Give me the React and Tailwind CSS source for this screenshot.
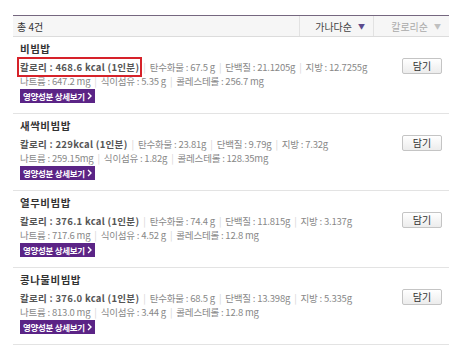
import React from 'react';

// Food nutrition search results
const FONT = { fontFamily: '"Noto Sans CJK KR", "Noto Sans", sans-serif' };

const foods = [
  {
    name: '비빔밥',
    kcal: '468.6 kcal',
    carb: '67.5 g',
    protein: '21.1205g',
    fat: '12.7255g',
    sodium: '647.2 mg',
    fiber: '5.35 g',
    chol: '256.7 mg',
    highlight: true,
  },
  {
    name: '새싹비빔밥',
    kcal: '229kcal',
    carb: '23.81g',
    protein: '9.79g',
    fat: '7.32g',
    sodium: '259.15mg',
    fiber: '1.82g',
    chol: '128.35mg',
  },
  {
    name: '열무비빔밥',
    kcal: '376.1 kcal',
    carb: '74.4 g',
    protein: '11.815g',
    fat: '3.137g',
    sodium: '717.6 mg',
    fiber: '4.52 g',
    chol: '12.8 mg',
  },
  {
    name: '콩나물비빔밥',
    kcal: '376.0 kcal',
    carb: '68.5 g',
    protein: '13.398g',
    fat: '5.335g',
    sodium: '813.0 mg',
    fiber: '3.44 g',
    chol: '12.8 mg',
  },
];

function Bar() {
  return <span className="mx-[4px] text-[#d4d4d4]">|</span>;
}

function FoodRow({ food }) {
  return (
    <div className="flex border-b border-[#e3e3e3] pl-[7px] pr-[7px] pt-[5px] pb-[10px]">
      <div className="flex-1">
        <div className="h-[14px] text-[10.5px] font-bold leading-[14px] tracking-[0.5px] text-[#333]">
          {food.name}
        </div>
        <div className="mt-[4px] h-[14px] text-[9.5px] leading-[14px] tracking-[-0.2px] text-[#888] whitespace-nowrap">
          <span
            className={
              'font-bold tracking-[0.3px] text-[#555] ' +
              (food.highlight ? 'outline-2 outline-offset-[1px] outline-solid outline-[#d6222a]' : '')
            }
          >
            칼로리 : {food.kcal} (1인분)
          </span>
          <Bar />
          <span>탄수화물 : {food.carb}</span>
          <Bar />
          <span>단백질 : {food.protein}</span>
          <Bar />
          <span>지방 : {food.fat}</span>
        </div>
        <div className="h-[14px] text-[9.5px] leading-[14px] tracking-[-0.2px] text-[#888] whitespace-nowrap">
          <span>나트륨 : {food.sodium}</span>
          <Bar />
          <span>식이섬유 : {food.fiber}</span>
          <Bar />
          <span>콜레스테롤 : {food.chol}</span>
        </div>
        <div className="mt-[1px] flex">
          <span className="flex h-[14px] items-center gap-[2px] bg-[#5b2486] px-[3px] text-[8.5px] font-bold leading-none tracking-[-0.3px] text-white whitespace-nowrap">
            영양성분 상세보기
            <svg width="5" height="8" viewBox="0 0 5 8" fill="none">
              <path d="M1 1l3 3-3 3" stroke="white" strokeWidth="1.4" />
            </svg>
          </span>
        </div>
      </div>
      <div className="pt-[16px]">
        <button className="flex h-[16px] w-[40px] items-center justify-center rounded-[2px] border border-[#c4c4c4] bg-gradient-to-b from-white to-[#ececec] text-[10px] leading-none text-[#333]">
          담기
        </button>
      </div>
    </div>
  );
}

export default function App() {
  return (
    <div className="h-[350px] w-[466px] bg-white pt-[15px]" style={FONT}>
      <div className="ml-[13px] w-[436px]">
        <div className="flex h-[22px] items-center border-t border-b border-t-[#75677f] border-b-[#dcdcdc] bg-[#f6f6f6] text-[10px]">
          <div className="flex-1 pl-[4px] text-[#333]">총 4건</div>
          <div className="flex h-full w-[74px] items-center justify-end gap-[6px] border-l border-[#e2e2e2] pr-[8px] text-[#444]">
            가나다순
            <span className="text-[7px] text-[#5c4a8c]">▼</span>
          </div>
          <div className="flex h-full w-[76px] items-center justify-end gap-[6px] border-l border-[#e2e2e2] pr-[8px] text-[#aaa]">
            칼로리순
            <span className="text-[7px] text-[#c0c0c0]">▼</span>
          </div>
        </div>
        {foods.map((f) => (
          <FoodRow key={f.name} food={f} />
        ))}
      </div>
    </div>
  );
}
